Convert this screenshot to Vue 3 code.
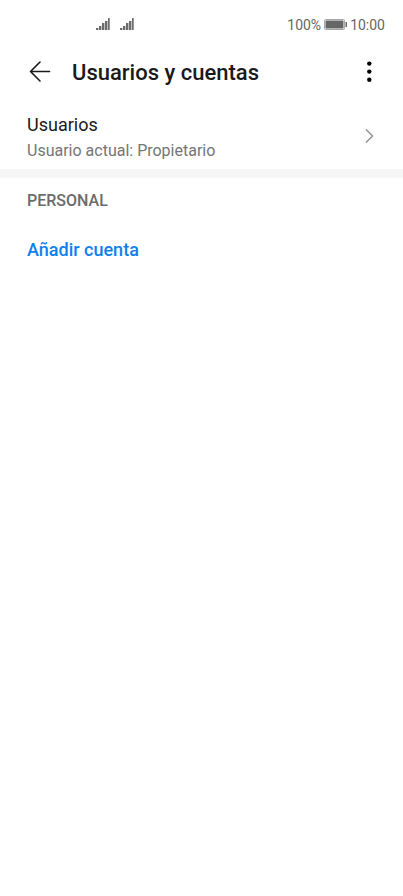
<script setup>
const signals = [0, 1]
</script>

<template>
  <div class="screen">
    <div class="status">
      <div class="signals">
        <svg v-for="s in signals" :key="s" class="signal" viewBox="0 0 14 13" aria-hidden="true">
          <path fill="#c4c4c4" d="M2 10h1v2H2zM5 8h1v4H5zM8 5h1v7H8zM11 3h1v9h-1zM13 0h1v12h-1z" />
          <path d="M0 10h2v2H0zM3 8h2v4H3zM6 5h2v7H6zM9 3h2v9H9zM12 0h1.500v12H12z" />
        </svg>
      </div>
      <div class="power">
        <span>100%</span>
        <svg class="battery" viewBox="0 0 23 11" aria-hidden="true">
          <rect x="0.5" y="0.5" width="20" height="10" rx="1" fill="none" stroke="#a6a6a6" />
          <rect x="1.500" y="1.500" width="18" height="8" fill="#666" />
          <rect x="21.500" y="3" width="1.500" height="5" fill="#666" />
        </svg>
        <span>10:00</span>
      </div>
    </div>
    <header class="bar">
      <button class="icon" type="button" aria-label="Atrás">
        <svg width="22" height="22" viewBox="0 0 22 22" aria-hidden="true">
          <path d="M20.500 10.500H1.500M11 1L1.500 10.500L11 20" fill="none" stroke="#1a1a1a" stroke-width="1.600" stroke-linecap="round" stroke-linejoin="round" />
        </svg>
      </button>
      <h1>Usuarios y cuentas</h1>
      <button class="icon more" type="button" aria-label="Más opciones">
        <svg width="6" height="22" viewBox="0 0 6 22" aria-hidden="true">
          <circle cx="3.300" cy="2.600" r="2.200" /><circle cx="3.300" cy="10.600" r="2.200" /><circle cx="3.300" cy="18.700" r="2.200" />
        </svg>
      </button>
    </header>
    <main>
      <a class="row" href="#usuarios">
        <span class="labels">
          <span class="title">Usuarios</span>
          <span class="sub">Usuario actual: Propietario</span>
        </span>
        <svg width="10" height="16" viewBox="0 0 10 16" aria-hidden="true">
          <path d="M1 0.500L7.500 7L1 13.500" fill="none" stroke="#999" stroke-width="1.600" />
        </svg>
      </a>
      <section class="personal">
        <h2>PERSONAL</h2>
        <button class="add" type="button">Añadir cuenta</button>
      </section>
    </main>
  </div>
</template>

<style>
body {
  margin: 0;
  background: #fff;
}
</style>

<style scoped>
.screen {
  min-height: 100vh;
  background: #fff;
  color: #1a1a1a;
  font-family: Roboto, sans-serif;
}
.status {
  display: flex;
  justify-content: space-between;
  align-items: center;
  height: 49px;
  padding: 0 18px 0 96px;
  color: #666;
  font-size: 14px;
}
.signals {
  display: flex;
  gap: 10px;
}
.signal {
  width: 14px;
  height: 13px;
  fill: #6b6b6b;
}
.power {
  display: flex;
  align-items: center;
  gap: 3px;
}
.battery {
  width: 23px;
  height: 11px;
}
.bar {
  display: flex;
  align-items: center;
  height: 46px;
  padding: 0 31px 0 29px;
}
button {
  border: 0;
  padding: 0;
  background: none;
  font-family: inherit;
  cursor: pointer;
}
.icon {
  display: flex;
}
.more {
  margin-left: auto;
}
h1 {
  margin: 0;
  padding: 2px 0 0 21px;
  font-size: 22px;
  line-height: 26px;
  font-weight: 500;
}
.row {
  display: flex;
  justify-content: space-between;
  align-items: center;
  padding: 16px 28px 6px 27px;
  border-bottom: 9px solid #f6f6f6;
  color: inherit;
  text-decoration: none;
}
.labels {
  display: flex;
  flex-direction: column;
}
.title {
  font-size: 18px;
  line-height: 28px;
}
.sub {
  color: #757575;
  font-size: 16px;
  line-height: 24px;
}
.personal {
  padding: 11px 27px;
}
h2 {
  margin: 0 0 24px;
  color: #6b6b6b;
  font-size: 16px;
  line-height: 24px;
  font-weight: 500;
}
.add {
  color: #0f7fee;
  font-size: 18px;
  line-height: 26px;
  font-weight: 500;
}
</style>
